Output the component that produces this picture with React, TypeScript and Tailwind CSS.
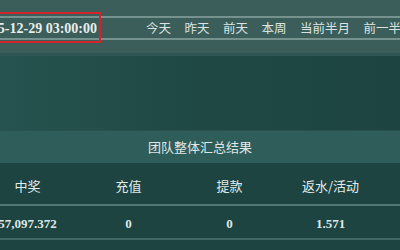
import React from "react";

const cjk = { fontFamily: '"Noto Sans CJK SC", "Noto Sans", sans-serif' };
const serif = { fontFamily: '"Liberation Serif", "DejaVu Serif", serif' };

export default function App() {
  const tabs = ["今天", "昨天", "前天", "本周", "当前半月", "前一半月"];
  const cols = [
    { h: "中奖", v: "57,097.372" },
    { h: "充值", v: "0" },
    { h: "提款", v: "0" },
    { h: "返水/活动", v: "1.571" },
    { h: "盈亏", v: "0" },
  ];
  return (
    <div className="w-[400px] h-[250px] overflow-hidden bg-[#1d4441] text-[#e3ebe9]">
      {/* top filter bar */}
      <div className="h-[56px] bg-[#3b5e5b] border-b-[3px] border-[#2f5451] pt-[16px]">
        <div className="h-[24px] border-y-2 border-[#75928f] flex items-center">
          <div className="relative w-[101px] shrink-0 h-full flex items-center">
            <div className="absolute left-[-10px] right-0 top-[-6px] bottom-[-5px] border-2 border-[#d3232b]" />
            <div className="w-[97px] shrink-0 overflow-hidden flex justify-end">
              <span
                className="shrink-0 whitespace-nowrap text-[14px] font-bold text-[#e8eeec]"
                style={serif}
              >
                2015-12-29 03:00:00
              </span>
            </div>
          </div>
          <div className="flex shrink-0 items-center gap-[13.5px] ml-[45px] whitespace-nowrap text-[12.5px] text-[#dbe4e2]" style={cjk}>
            {tabs.map((t) => (
              <span key={t}>{t}</span>
            ))}
          </div>
        </div>
      </div>
      {/* empty gradient area */}
      <div className="h-[74px] bg-gradient-to-r from-[#26534f] via-[#1f4844] to-[#1d4441]" />
      {/* summary title */}
      <div
        className="h-[33px] bg-[#2f5d59] border-t border-[#2a514e] flex items-center justify-center text-[13px] text-[#e0e8e6]"
        style={cjk}
      >
        团队整体汇总结果
      </div>
      {/* table */}
      <div className="ml-[-23px] w-[505px]">
        <div className="h-[43px] pt-[5px] grid grid-cols-5 items-center border-b-2 border-[#4f7773] text-[13px]" style={cjk}>
          {cols.map((c) => (
            <div key={c.h} className="text-center">{c.h}</div>
          ))}
        </div>
        <div className="h-[34px] pt-[4px] grid grid-cols-5 items-center border-b-2 border-[#3f6764] text-[13px] font-bold text-[#dfe7e5]" style={serif}>
          {cols.map((c) => (
            <div key={c.h} className="text-center">{c.v}</div>
          ))}
        </div>
      </div>
    </div>
  );
}
